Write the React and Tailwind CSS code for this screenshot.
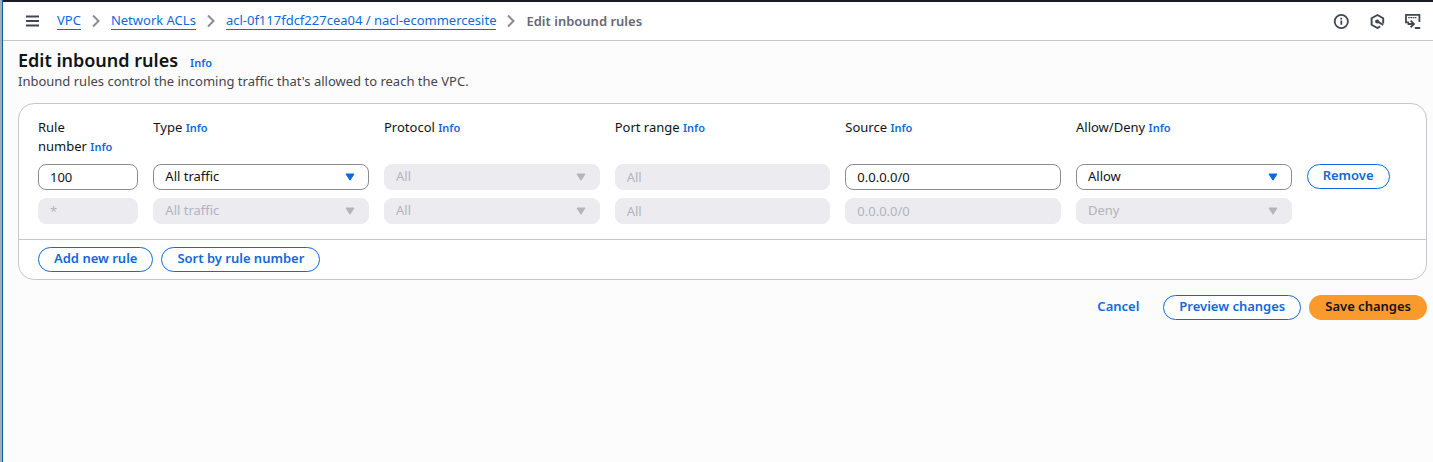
import React from "react";

function Info({ topic }) {
  return (
    <a href="#info" aria-label={`Info: ${topic}`} className="text-[11px] font-semibold text-[#0f69dc]">
      Info
    </a>
  );
}

function ColumnLabel({ htmlFor, children, className = "col-span-2" }) {
  return (
    <div className={`${className} text-[13px] leading-[19px] text-[#0f141a]`}>
      <label htmlFor={htmlFor}>{children}</label>
      {"\u00a0"}
      <Info topic={children} />
    </div>
  );
}

const fieldBase =
  "block h-[26px] w-full appearance-none rounded-lg border px-[11px] text-[13px] leading-[18px] outline-none";
const fieldEnabled = "border-[#8c8c94] bg-white text-[#0f141a]";
const fieldDisabled = "border-[#ebebf0] bg-[#ebebf0] text-[#b4b4bb] opacity-100";

function TextField({ id, label, value, disabled, className = "col-span-2" }) {
  return (
    <div className={className}>
      <input
        id={id}
        aria-label={label}
        type="text"
        defaultValue={value}
        disabled={disabled}
        className={`${fieldBase} ${disabled ? fieldDisabled : fieldEnabled}`}
      />
    </div>
  );
}

function SelectField({ id, label, value, options = [], disabled }) {
  return (
    <div className="relative col-span-2">
      <select
        id={id}
        aria-label={label}
        defaultValue={value}
        disabled={disabled}
        className={`${fieldBase} pb-[2px] ${disabled ? fieldDisabled : fieldEnabled}`}
      >
        <option>{value}</option>
        {options.map((o) => (
          <option key={o}>{o}</option>
        ))}
      </select>
      <svg
        viewBox="0 0 10 8"
        aria-hidden="true"
        className={`pointer-events-none absolute top-[9px] right-3.5 h-2 w-2.5 ${disabled ? "text-[#b4b4bb]" : "text-[#0f69dc]"}`}
      >
        <path d="M1 1h8L5 7.2z" fill="currentColor" stroke="currentColor" strokeLinejoin="round" />
      </svg>
    </div>
  );
}

function PillButton({ children }) {
  return (
    <button
      type="button"
      className="h-[25px] rounded-full border border-[#0f69dc] bg-white px-[15px] pb-[2px] text-[13px] leading-[18px] font-semibold whitespace-nowrap text-[#0f69dc]"
    >
      {children}
    </button>
  );
}

function Chevron() {
  return (
    <svg viewBox="0 0 10 14" aria-hidden="true" className="h-3.5 w-2.5 text-[#8c8c94]">
      <path d="M2 1.5 7.5 7 2 12.5" fill="none" stroke="currentColor" strokeWidth="2" />
    </svg>
  );
}

function Crumb({ children }) {
  return (
    <li className="flex items-center gap-[10px]">
      <a href="#crumb" className="border-b border-[#0f69dc] leading-[17px] text-[#0f69dc]">
        {children}
      </a>
      <Chevron />
    </li>
  );
}

function TopBar() {
  return (
    <header className="flex h-[41px] items-center justify-between border-t-2 border-b border-t-[#161d26] border-b-[#c6c6cd] bg-white pr-3 pl-[23px]">
      <div className="flex items-center gap-[17px]">
        <button type="button" aria-label="Open navigation" className="text-[#424650]">
          <svg viewBox="0 0 14 14" className="h-3.5 w-3.5">
            <path d="M0 2.5h13M0 7h13M0 11.5h13" stroke="currentColor" strokeWidth="2" />
          </svg>
        </button>
        <nav aria-label="Breadcrumbs">
          <ol className="flex items-center gap-[10px] text-[13px]">
            <Crumb>VPC</Crumb>
            <Crumb>Network ACLs</Crumb>
            <Crumb>acl-0f117fdcf227cea04 / nacl-ecommercesite</Crumb>
            <li aria-current="page" className="leading-[18px] font-semibold text-[#656871]">
              Edit inbound rules
            </li>
          </ol>
        </nav>
      </div>
      <div className="flex items-center gap-5 text-[#424650]">
        <button type="button" aria-label="Information">
          <svg viewBox="0 0 16 16" className="h-4 w-4" fill="none" stroke="currentColor" strokeWidth="1.8">
            <circle cx="8.3" cy="8.5" r="6.6" />
            <path d="M8.3 7.5v4.3M8.3 4.8v1.7" />
          </svg>
        </button>
        <button type="button" aria-label="Diagnostics">
          <svg viewBox="0 0 16 16" className="h-4 w-4" fill="none" stroke="currentColor" strokeWidth="1.9">
            <path d="M14.2 10.6V5.2L8.4 2 2.6 5.2v6.6L8.4 15l2.8-1.6" />
            <circle cx="8.2" cy="8.5" r="2.1" fill="currentColor" stroke="none" />
            <path d="M8.4 8.5l5.8 3.3" />
          </svg>
        </button>
        <button type="button" aria-label="CloudShell">
          <svg viewBox="0 0 16 16" className="h-4 w-4" fill="none" stroke="currentColor" strokeWidth="1.8">
            <path d="M4 9.4H1V1.9h13.4v7.2" />
            <path d="M3.2 4.6h8.2" strokeWidth="1.2" strokeDasharray="1.6 .6" />
            <path d="M2.6 11h6M5.6 7.6 9 11l-3.4 3.4M9.8 15h5.4" />
          </svg>
        </button>
      </div>
    </header>
  );
}

export default function App() {
  return (
    <div className="flex min-h-screen border-l-2 border-[#a9adb3] bg-[#fcfcfd] font-['Noto_Sans',sans-serif]">
      <div className="min-w-0 flex-1 border-l border-[#0a5c9e]">
        <TopBar />
        <main className="pt-2 pr-1.5 pl-[15px]">
          <div className="flex items-baseline gap-3">
            <h1 className="text-[18px] leading-[22px] font-semibold text-[#0f141a]">Edit inbound rules</h1>
            <Info topic="Edit inbound rules" />
          </div>
          <p className="text-[13px] leading-[18px] text-[#424650]">
            Inbound rules control the incoming traffic that's allowed to reach the VPC.
          </p>

          <form onSubmit={(e) => e.preventDefault()}>
            <section className="mt-[13px] rounded-2xl border border-[#c6c6cd] bg-white">
              <div className="grid grid-cols-12 gap-x-[15px] gap-y-2 px-[19px] pt-3.5 pb-[15px]">
                <ColumnLabel htmlFor="number" className="col-span-1">
                  Rule number
                </ColumnLabel>
                <ColumnLabel htmlFor="type">Type</ColumnLabel>
                <ColumnLabel htmlFor="protocol">Protocol</ColumnLabel>
                <ColumnLabel htmlFor="port">Port range</ColumnLabel>
                <ColumnLabel htmlFor="source">Source</ColumnLabel>
                <ColumnLabel htmlFor="action">Allow/Deny</ColumnLabel>
                <div className="col-span-1" />

                <TextField id="number" value="100" className="col-span-1" />
                <SelectField id="type" value="All traffic" options={["Custom TCP", "HTTP (80)"]} />
                <SelectField id="protocol" value="All" disabled />
                <TextField id="port" value="All" disabled />
                <TextField id="source" value="0.0.0.0/0" />
                <SelectField id="action" value="Allow" options={["Deny"]} />
                <div className="col-span-1 flex items-start">
                  <PillButton>Remove</PillButton>
                </div>

                <TextField label="Default rule number" value="*" disabled className="col-span-1" />
                <SelectField label="Default rule type" value="All traffic" disabled />
                <SelectField label="Default rule protocol" value="All" disabled />
                <TextField label="Default rule port range" value="All" disabled />
                <TextField label="Default rule source" value="0.0.0.0/0" disabled />
                <SelectField label="Default rule action" value="Deny" disabled />
              </div>
              <div className="flex gap-2 border-t border-[#c6c6cd] px-[19px] py-[7px]">
                <PillButton>Add new rule</PillButton>
                <PillButton>Sort by rule number</PillButton>
              </div>
            </section>

            <div className="mt-[15px] flex justify-end gap-2">
              <button
                type="button"
                className="h-[25px] px-4 pb-[2px] text-[13px] leading-[18px] font-semibold text-[#0f69dc]"
              >
                Cancel
              </button>
              <PillButton>Preview changes</PillButton>
              <button
                type="submit"
                className="h-[25px] rounded-full bg-[#fa9a2c] px-4 pb-[2px] text-[13px] leading-[18px] font-semibold text-[#0f141a]"
              >
                Save changes
              </button>
            </div>
          </form>
        </main>
      </div>
    </div>
  );
}
